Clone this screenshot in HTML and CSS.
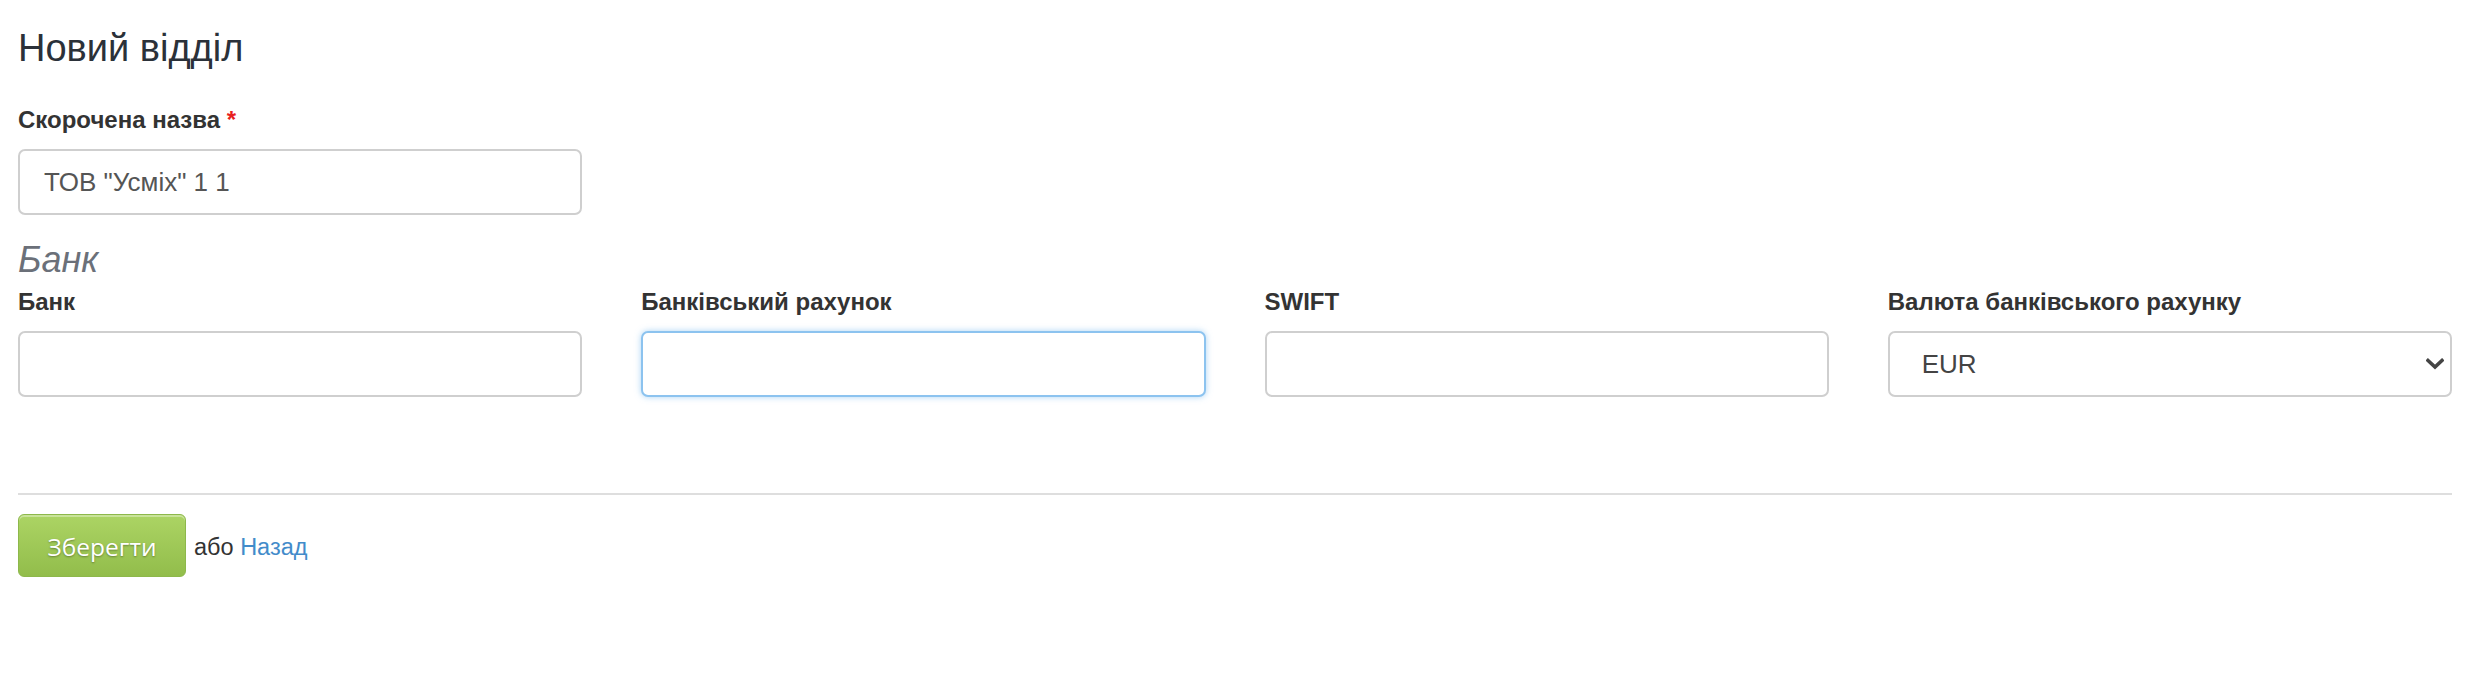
FILE: index.html
```html
<!DOCTYPE html>
<html lang="uk">
<head>
<meta charset="utf-8">
<title>Новий відділ</title>
<link rel="stylesheet" href="styles.css">
</head>
<body>
<div class="page">
  <h1 class="title">Новий відділ</h1>
  <form class="form">
    <div class="field short">
      <label class="label">Скорочена назва <span class="req">*</span></label>
      <input class="input" type="text" value="ТОВ &quot;Усміх&quot; 1 1">
    </div>
    <h2 class="section">Банк</h2>
    <div class="grid">
      <div class="field">
        <label class="label">Банк</label>
        <input class="input" type="text">
      </div>
      <div class="field">
        <label class="label">Банківський рахунок</label>
        <input class="input focus" type="text">
      </div>
      <div class="field">
        <label class="label">SWIFT</label>
        <input class="input" type="text">
      </div>
      <div class="field">
        <label class="label">Валюта банківського рахунку</label>
        <div class="select-wrap">
          <select class="input select">
            <option>EUR</option>
          </select>
          <svg class="chev" width="18" height="12" viewBox="0 0 18 12"><path d="M2 2.5 L9 9 L16 2.5" fill="none" stroke="#444" stroke-width="3.6" stroke-linecap="square"/></svg>
        </div>
      </div>
    </div>
    <hr class="sep">
    <div class="actions">
      <button class="btn" type="button">Зберегти</button>
      <span class="or">або <a class="link" href="#">Назад</a></span>
    </div>
  </form>
</div>
</body>
</html>
```

FILE: styles.css
```css
html, body {
  margin: 0;
  padding: 0;
  background: #fff;
}
body {
  font-family: "Liberation Sans", Arial, sans-serif;
  color: #333;
  font-size: 24px;
}
.page {
  padding: 0 32px 0 18px;
}
.title {
  margin: 27px 0 0 0;
  font-size: 38px;
  line-height: 42px;
  font-weight: normal;
  color: #2b3139;
}
.form {
  display: block;
}
.field {
  display: flex;
  flex-direction: column;
}
.short {
  width: 564px;
  margin-top: 36px;
}
.label {
  font-weight: bold;
  font-size: 24px;
  line-height: 30px;
  color: #333;
  margin-bottom: 14px;
}
.req {
  color: #e82020;
}
.input {
  box-sizing: border-box;
  height: 66px;
  width: 100%;
  border: 2px solid #cfcfcf;
  border-radius: 7px;
  padding: 0 24px;
  font-family: "Liberation Sans", Arial, sans-serif;
  font-size: 26px;
  color: #555;
  background: #fff;
  outline: none;
  margin: 0;
}
.input.focus {
  border-color: #8cc3ef;
  box-shadow: 0 0 6px rgba(102, 175, 233, 0.55);
}
.section {
  margin: 25px 0 0 0;
  font-size: 36px;
  line-height: 40px;
  font-weight: normal;
  font-style: italic;
  color: #6b7079;
}
.grid {
  display: grid;
  grid-template-columns: repeat(4, 1fr);
  column-gap: 59px;
  margin-top: 7px;
}
.select-wrap {
  position: relative;
}
.select {
  appearance: none;
  -webkit-appearance: none;
  padding-left: 32px;
  color: #444;
}
.chev {
  position: absolute;
  right: 8px;
  top: 27px;
}
.sep {
  margin: 96px 0 0 0;
  border: 0;
  border-top: 2px solid #dedede;
  height: 0;
}
.actions {
  display: flex;
  align-items: center;
  gap: 8px;
  margin-top: 19px;
}
.btn {
  box-sizing: border-box;
  width: 168px;
  height: 63px;
  border: 1px solid #8db84b;
  border-radius: 6px;
  background: linear-gradient(#acd464, #92bd4b);
  box-shadow: inset 0 2px 0 rgba(255, 255, 255, 0.35);
  color: #fff;
  font-family: "Open Sans", sans-serif;
  font-size: 24.5px;
  text-shadow: 0 1px 2px rgba(0, 0, 0, 0.35);
  padding: 2px 0 0 0;
  cursor: pointer;
}
.or {
  font-size: 23.5px;
  color: #333;
  padding-top: 4px;
}
.link {
  color: #428bca;
  text-decoration: none;
}
```
